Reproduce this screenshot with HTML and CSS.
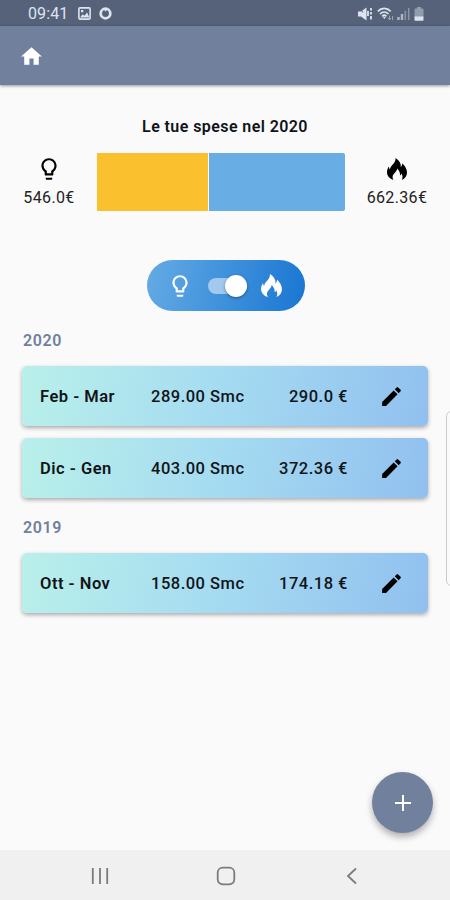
FILE: index.html
```html
<!DOCTYPE html>
<html lang="it">
<head>
<meta charset="utf-8">
<meta name="viewport" content="width=device-width">
<title>Spese</title>
<link rel="stylesheet" href="styles.css">
</head>
<body>
<svg class="defs" width="0" height="0">
  <symbol id="bulb" viewBox="0 0 24 24"><path d="M9 21c0 .55.45 1 1 1h4c.55 0 1-.45 1-1v-1H9v1zm3-19C8.14 2 5 5.14 5 9c0 2.38 1.19 4.47 3 5.74V17c0 .55.45 1 1 1h6c.55 0 1-.45 1-1v-2.26c1.81-1.27 3-3.36 3-5.74 0-3.86-3.14-7-7-7zm2.85 11.1l-.85.6V16h-4v-2.3l-.85-.6A4.997 4.997 0 0 1 7 9c0-2.76 2.24-5 5-5s5 2.24 5 5c0 1.63-.8 3.16-2.15 4.1z"/></symbol>
  <symbol id="flame" viewBox="0 0 20 22"><path d="M8.500 0C12.500 2.600 14.200 5.600 13.800 9c1-.9 1.500-2.200 1.400-3.800C18.300 8.200 20 11.200 20 14.500c0 3.400-2 6-5.200 7.500 1.200-2.600.8-4.600-.4-6.400-.2.900-.6 1.500-1.300 1.900.1-3-1-5.300-3-7 .1 3.200-4.500 5.200-4.500 8.500 0 1.100.3 2 .8 3C2.400 20.600 0 17.800 0 14.300c0-2.200.7-4 1.900-5.800.1 1.300.4 2.200 1.100 2.900C3.200 7.400 9 5.600 8.500 0z"/></symbol>
  <symbol id="pencil" viewBox="0 0 24 24"><path d="M3 17.250V21h3.750L17.810 9.940l-3.750-3.750L3 17.250zM20.710 7.040a.996.996 0 0 0 0-1.410l-2.340-2.340a.996.996 0 0 0-1.410 0l-1.830 1.830 3.750 3.750 1.830-1.830z"/></symbol>
</svg>
<div class="screen">
  <header class="status">
    <span class="clock">09:41</span>
    <svg class="picture" width="13" height="13" viewBox="0 0 13 13"><rect x=".9" y=".9" width="11.200" height="11.200" rx="1" fill="none" stroke="currentColor" stroke-width="1.600"/><path fill="currentColor" d="M2 10.500l2.700-3.300 1.800 1.600L9 5.500l2.500 5zM3 3h2.300v2.300H3z"/></svg>
    <svg class="ring" width="13" height="13" viewBox="0 0 13 13"><circle cx="6.500" cy="6.500" r="4.800" fill="none" stroke="currentColor" stroke-width="2.700"/><path fill="currentColor" d="M5 2.500l3 0-1.200 2.300z"/></svg>
    <span class="grow"></span>
    <svg class="mute" width="15" height="14" viewBox="0 0 15 14"><path fill="currentColor" d="M0 4.500h3L8.500 .5v13l-5.500-4H0z"/><path fill="none" stroke="#566279" d="M1.500 .5l3.500 5"/><path fill="none" stroke="currentColor" stroke-width="1.800" d="M10 4v5M13 1v2.500M13 5v2.500M13 9v3.500"/></svg>
    <svg class="wifi" width="17" height="14" viewBox="0 0 17 14"><g fill="none" stroke="currentColor" stroke-width="1.700"><path d="M.8 4.300C4.500.5 10 .5 13.700 4.300M3 7c2.500-2.700 6-2.700 8.500 0"/><path d="M5.200 9.300c1.200-1.200 3-1.200 4.200 0"/></g><path fill="currentColor" d="M5.800 10h3l-1.500 2z"/><path stroke="currentColor" opacity=".5" d="M12.500 8.500v4m-1.500-1.500l1.500 1.800 1.300-1.800M15.500 13V9"/></svg>
    <svg class="signal" width="13" height="13" viewBox="0 0 13 13"><path stroke="currentColor" stroke-width="2.400" opacity=".65" d="M1.500 13v-3M5 13V7"/><path stroke="currentColor" stroke-width="1.500" opacity=".4" d="M8.300 13V4M11.700 13V1"/></svg>
    <svg class="battery" width="10" height="14" viewBox="0 0 10 14"><path fill="currentColor" opacity=".45" d="M3 0h4v1.500h1.500q1 0 1 1V10h-9V2.500q0-1 1-1H3z"/><path fill="currentColor" d="M.5 9.500h9V13q0 .7-.7.700H1.200q-.7 0-.7-.7z"/></svg>
  </header>
  <nav class="appbar"><svg width="25" height="25" viewBox="0 0 24 24"><path fill="currentColor" d="M10 20v-6h4v6h5v-8h3L12 3 2 12h3v8z"/></svg></nav>
  <main class="content">
    <h1 class="title">Le tue spese nel 2020</h1>
    <section class="summary">
      <div class="total light"><svg width="26" height="26"><use href="#bulb"/></svg><span>546.0€</span></div>
      <div class="chart"><div class="bar power"></div><div class="bar gas"></div></div>
      <div class="total heat"><svg class="fire" width="20" height="22"><use href="#flame"/></svg><span>662.36€</span></div>
    </section>
    <div class="switcher">
      <svg width="26" height="26"><use href="#bulb"/></svg>
      <span class="track"><span class="thumb"></span></span>
      <svg width="21" height="23"><use href="#flame"/></svg>
    </div>
    <h2 class="year">2020</h2>
    <article class="card"><b>Feb - Mar</b><span>289.00 Smc</span><span class="price">290.0 €</span><svg width="25" height="25"><use href="#pencil"/></svg></article>
    <article class="card"><b>Dic - Gen</b><span>403.00 Smc</span><span class="price">372.36 €</span><svg width="25" height="25"><use href="#pencil"/></svg></article>
    <h2 class="year second">2019</h2>
    <article class="card"><b>Ott - Nov</b><span>158.00 Smc</span><span class="price">174.18 €</span><svg width="25" height="25"><use href="#pencil"/></svg></article>
  </main>
  <footer class="navbar">
    <svg width="18" height="18" viewBox="0 0 18 18"><path d="M1.800 1v16M9 1v16M16.200 1v16"/></svg>
    <svg width="20" height="20" viewBox="0 0 20 20"><rect x="1.700" y="1.700" width="16.600" height="16.600" rx="5"/></svg>
    <svg width="18" height="18" viewBox="0 0 18 18"><path d="M13 1.500L5 9l8 7.500"/></svg>
  </footer>
  <div class="edge"></div>
  <button class="fab" aria-label="Aggiungi"><svg width="16" height="16" viewBox="0 0 16 16"><path d="M8 0v16M0 8h16"/></svg></button>
</div>
</body>
</html>
```
FILE: styles.css
```css
* { box-sizing: border-box; }
body { margin: 0; font-family: Roboto, sans-serif; color: #101418; }
svg { display: block; flex: none; fill: currentColor; }
.defs { position: absolute; }
.screen { position: relative; width: 450px; height: 900px; overflow: hidden; display: flex; flex-direction: column; background: #fafafa; }
.status { height: 26px; flex: none; display: flex; align-items: center; padding: 1px 26px 0 28px; background: #566279; color: #dce5ef; }
.clock { font-size: 16px; width: 50px; letter-spacing: .1px; }
.ring { margin-left: 8px; }
.grow { flex: 1; }
.wifi { margin-left: 4px; }
.signal { margin-left: 3px; }
.battery { margin-left: 4px; }
.appbar { height: 59px; flex: none; padding: 18px 19px; background: #71809d; color: #fff; box-shadow: 0 1px 3px rgba(0,0,0,.4); }
.content { flex: 1; padding: 0 22px; }
.title { margin: 32px 0 0; font-size: 16px; line-height: 20px; font-weight: 600; letter-spacing: .42px; text-align: center; }
.summary { display: flex; height: 58px; margin: 16px -3px 0; }
.total { display: flex; flex-direction: column; align-items: center; font-size: 16px; line-height: 20px; letter-spacing: .35px; color: #222; width: 60px; }
.total svg { color: #000; margin: 3px 0 6px; }
.total .fire { margin: 5px 0 8px; }
.heat { width: 68px; margin-left: 18px; }
.chart { display: flex; gap: 1px; width: 248px; margin-left: 18px; }
.bar { height: 58px; }
.power { width: 111px; background: #fac02e; }
.gas { flex: 1; background: #68aee5; border-radius: 0 2px 2px 0; }
.switcher { width: 158px; height: 51px; margin: 49px 0 0 125px; padding: 0 23px 0 20px; border-radius: 26px; background: linear-gradient(100deg, #64abe5, #1976d2); display: flex; align-items: center; justify-content: space-between; color: #fff; }
.track { width: 39px; height: 16px; border-radius: 8px; background: rgba(255,255,255,.5); display: flex; align-items: center; justify-content: flex-end; }
.thumb { width: 22px; height: 22px; flex: none; border-radius: 50%; background: #fff; box-shadow: 0 1px 3px rgba(0,0,0,.4); }
.year { margin: 20px 0 15px 1px; font-size: 16px; line-height: 20px; font-weight: 600; letter-spacing: .6px; color: #71809d; }
.second { margin-top: 20px; }
.card { height: 60px; margin-bottom: 12px; padding: 0 24px 0 18px; border-radius: 5px; background: linear-gradient(100deg, #b9f0ea, #a5dbf1 49%, #91c0ef); box-shadow: 0 2px 4px rgba(0,0,0,.32); display: grid; grid-template-columns: 111px 110px 87px 1fr; align-items: center; font-size: 16.500px; font-weight: 500; letter-spacing: .5px; }
.card b { font-weight: 600; letter-spacing: .5px; }
.price { text-align: right; }
.card svg { justify-self: end; color: #000; }
.navbar { height: 50px; flex: none; padding: 2px 89px 0 91px; background: #f0f0f0; display: flex; align-items: center; justify-content: space-between; color: #7b7b7b; }
.navbar svg { fill: none; stroke: currentColor; stroke-width: 1.800; }
.edge { position: absolute; left: 446px; top: 411px; width: 10px; height: 175px; border: 1px solid #ccc; border-radius: 6px; background: #fafafa; }
.fab { position: absolute; left: 372px; top: 772px; width: 61px; height: 61px; border: 0; padding: 0; border-radius: 50%; background: #71809d; color: #fff; display: flex; align-items: center; justify-content: center; box-shadow: 0 4px 7px rgba(0,0,0,.3); }
.fab svg { stroke: currentColor; stroke-width: 2; }
```
